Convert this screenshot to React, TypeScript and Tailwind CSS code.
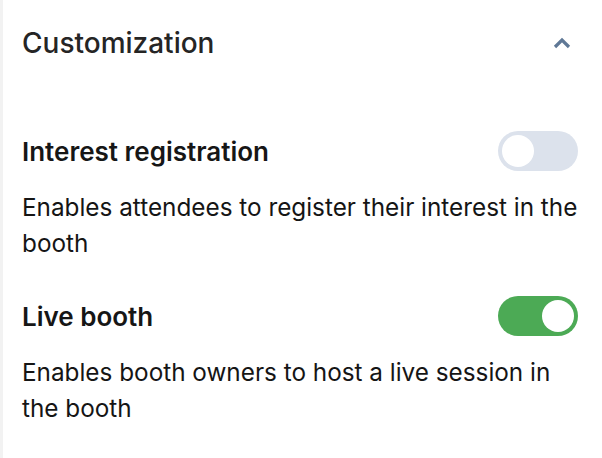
import React from "react";

function Toggle({ on }: { on: boolean }) {
  return (
    <div
      className={
        "flex h-[40px] w-[80px] shrink-0 items-center rounded-full p-[4px] " +
        (on ? "justify-end bg-[#4caa55]" : "justify-start bg-[#dce2ec]")
      }
    >
      <div className="h-[32px] w-[32px] rounded-full bg-white" />
    </div>
  );
}

export default function App() {
  return (
    <div
      className="h-[458px] w-[602px] border-l-[3px] border-[#f2f2f2] bg-white pl-[19px] pr-[24px]"
      style={{ fontFamily: "Inter, 'Noto Sans', sans-serif" }}
    >
      <div className="flex h-[86px] items-center justify-between pb-[1px]">
        <h2 className="text-[28px] font-medium text-[#252525]">Customization</h2>
        <svg width="20" height="14" viewBox="0 0 20 14" className="mr-[6px]">
          <path d="M3 11 L10 4 L17 11" fill="none" stroke="#5f7896" strokeWidth="3.2" />
        </svg>
      </div>
      <div className="pt-[45px]">
        <div className="flex h-[40px] items-center justify-between">
          <span className="text-[26px] font-semibold text-[#161616]">Interest registration</span>
          <Toggle on={false} />
        </div>
        <p className="mt-[18px] text-[24.3px] leading-[36px] text-[#151515]">
          Enables attendees to register their interest in the booth
        </p>
      </div>
      <div className="pt-[35px]">
        <div className="flex h-[40px] items-center justify-between">
          <span className="text-[26px] font-semibold text-[#161616]">Live booth</span>
          <Toggle on={true} />
        </div>
        <p className="mt-[18px] text-[24.3px] leading-[36px] text-[#151515]">
          Enables booth owners to host a live session in the booth
        </p>
      </div>
    </div>
  );
}
